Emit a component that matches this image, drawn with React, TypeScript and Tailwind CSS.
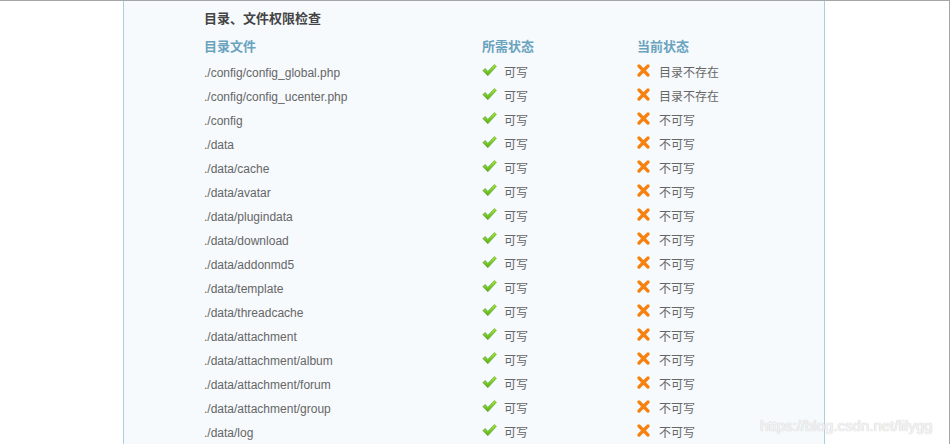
import React from "react"

const rows: [string, string][] = [
  ["./config/config_global.php", "目录不存在"],
  ["./config/config_ucenter.php", "目录不存在"],
  ["./config", "不可写"],
  ["./data", "不可写"],
  ["./data/cache", "不可写"],
  ["./data/avatar", "不可写"],
  ["./data/plugindata", "不可写"],
  ["./data/download", "不可写"],
  ["./data/addonmd5", "不可写"],
  ["./data/template", "不可写"],
  ["./data/threadcache", "不可写"],
  ["./data/attachment", "不可写"],
  ["./data/attachment/album", "不可写"],
  ["./data/attachment/forum", "不可写"],
  ["./data/attachment/group", "不可写"],
  ["./data/log", "不可写"],
]

function CheckIcon() {
  return (
    <svg width="15" height="13" viewBox="0 0 15 13" className="shrink-0 -mt-[5px]">
      <defs>
        <linearGradient id="ok" x1="0" y1="0" x2="0" y2="1">
          <stop offset="0" stopColor="#a4e845" />
          <stop offset="1" stopColor="#58ad1a" />
        </linearGradient>
      </defs>
      <path d="M0.8 6.6 L3.4 4.6 L5.8 7.4 L12.4 0.6 L14.4 2.4 L5.8 11.8 Z" fill="url(#ok)" stroke="#5aa31f" strokeWidth="0.6" strokeLinejoin="round" />
    </svg>
  )
}

function CrossIcon() {
  return (
    <svg width="13" height="13" viewBox="0 0 13 13" className="shrink-0 -mt-[5px]">
      <path d="M2 2 L11 11 M11 2 L2 11" stroke="#f7810f" strokeWidth="3.2" strokeLinecap="round" />
    </svg>
  )
}

export default function App() {
  return (
    <div className="w-[950px] h-[444px] overflow-hidden bg-white border-t border-r border-[#a6a6a6] relative" style={{ fontFamily: '"Liberation Sans", "Noto Sans CJK SC", sans-serif' }}>
      <div className="ml-[123px] w-[702px] h-full bg-[#f6fafd] border-l border-r border-[#a9d0df] pl-[80px] pt-[6px]">
        <div className="h-6 leading-6 text-[13px] font-bold text-[#444]">目录、文件权限检查</div>
        <div className="mt-1 flex h-6 items-center text-[13px] font-bold text-[#6aa3bd]">
          <div className="w-[278px]">目录文件</div>
          <div className="w-[155px]">所需状态</div>
          <div>当前状态</div>
        </div>
        <div className="mt-[2px]">
          {rows.map(([path, state]) => (
            <div key={path} className="flex h-6 items-center text-[12px] text-[#666]">
              <div className="w-[278px]">{path}</div>
              <div className="w-[155px] flex items-center gap-[7px]">
                <CheckIcon />
                <span>可写</span>
              </div>
              <div className="flex items-center gap-[9px]">
                <CrossIcon />
                <span>{state}</span>
              </div>
            </div>
          ))}
        </div>
      </div>
      <div className="absolute left-[760px] top-[414px] text-[15px] text-white/80 [text-shadow:0_0_1px_#c8c8c8,0_0_1px_#d0d0d0]">
        https://blog.csdn.net/lilygg
      </div>
    </div>
  )
}
